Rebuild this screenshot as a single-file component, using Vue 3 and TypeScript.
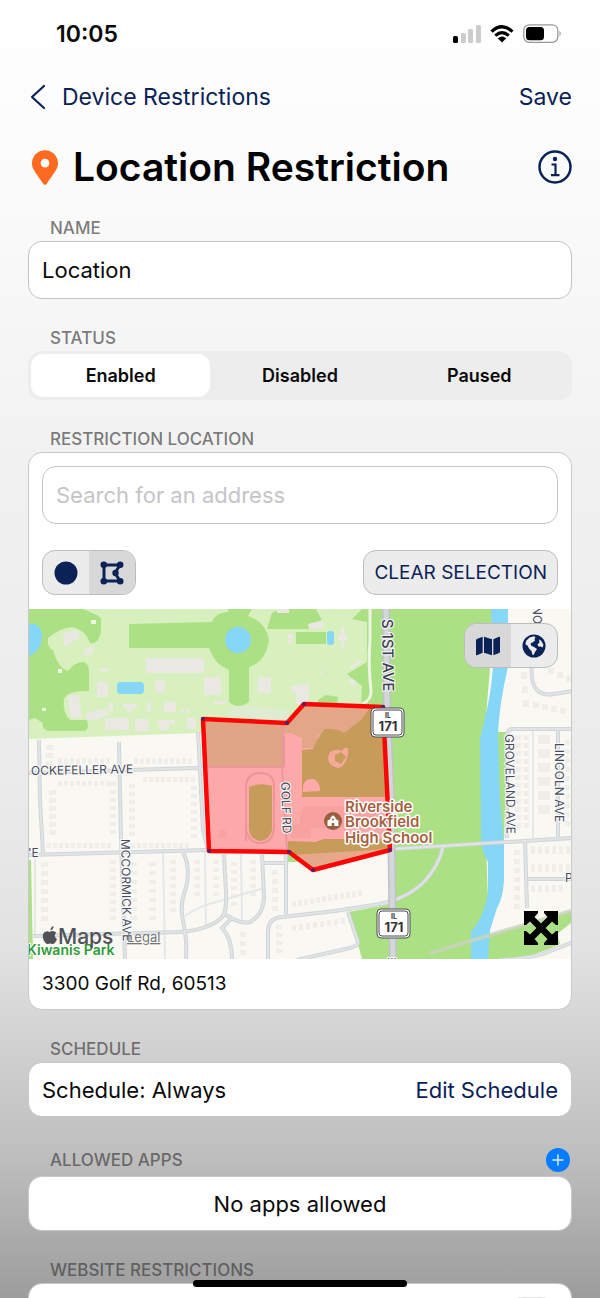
<script setup lang="ts">
import { ref } from 'vue'

type Status = 'Enabled' | 'Disabled' | 'Paused'
interface Row { x: number; y: number; n: number; dx: number; dy: number; w: number; h: number }

const statuses: Status[] = ['Enabled', 'Disabled', 'Paused']
const status = ref<Status>('Enabled')
const name = ref('Location')
const address = ref('')
const shape = ref<'circle' | 'polygon'>('polygon')
const layer = ref<'map' | 'globe'>('map')
const filtering = ref(false)

// Streets, drawn twice: a darker casing and a lighter centre line.
const streets: string[] = [
  'M29 773 L196 768 Q200 768 200 772 L203 830 L208 850',
  'M198 732 L200 768',
  'M39 740 L40 800 L43 854',
  'M119 742 L121 840 L125 960',
  'M29 855 L208 850 L393 849 L573 838',
  'M183 852 C190 866 189 880 184 894 C180 906 182 916 184 926 Q187 940 186 960',
  'M33 936 L180 932 C196 931 215 926 223 916 Q227 908 226 892 L224 854',
  'M223 913 Q240 925 250 922 Q264 914 264 896 L262 854',
  'M233 917 L222 928 Q232 938 232 960',
  'M286 853 L286 914',
  'M268 960 V932 Q268 918 282 917 L335 911 L393 902',
  'M380 904 Q413 897 429 876 Q441 860 443 846',
  'M348 912 L358 942 Q358 946 350 948 L297 960',
  'M573 729 H512 Q507 729 507 738 V838',
  'M532 660 Q530 684 537 690 Q543 696 554 694 L573 691',
  'M558 729 V838',
  'M525 840 L527 908',
  'M528 879 H573',
  'M500 960 Q535 958 548 952 L573 942',
  'M262 863 L286 863',
]
const lanes: string[] = [
  'M163 853 L165 960', 'M205 852 L206 925', 'M241 854 L242 920', 'M533 730 V838', 'M35 855 V935',
  'M185 916 Q198 906 220 901 L264 888',
]

// Runs of houses along the streets.
const rows: Row[] = [
  { x: 46, y: 745, n: 4, dx: 0, dy: 8, w: 7, h: 5 },
  { x: 58, y: 758, n: 9, dx: 6, dy: 0, w: 4, h: 6 },
  { x: 58, y: 781, n: 10, dx: 6, dy: 0, w: 4, h: 5 },
  { x: 134, y: 758, n: 10, dx: 6, dy: 0, w: 4, h: 6 },
  { x: 143, y: 777, n: 9, dx: 6, dy: 0, w: 4, h: 5 },
  { x: 49, y: 790, n: 6, dx: 0, dy: 8, w: 7, h: 5 },
  { x: 110, y: 782, n: 7, dx: 0, dy: 8, w: 6, h: 4 },
  { x: 129, y: 784, n: 7, dx: 0, dy: 8, w: 6, h: 4 },
  { x: 191, y: 786, n: 7, dx: 0, dy: 8, w: 6, h: 4 },
  { x: 47, y: 843, n: 11, dx: 6, dy: 0, w: 4, h: 5 },
  { x: 131, y: 843, n: 10, dx: 6, dy: 0, w: 4, h: 5 },
  { x: 41, y: 862, n: 7, dx: 0, dy: 9, w: 7, h: 5 },
  { x: 110, y: 860, n: 8, dx: 0, dy: 8, w: 6, h: 4 },
  { x: 130, y: 862, n: 7, dx: 0, dy: 9, w: 7, h: 4 },
  { x: 149, y: 862, n: 7, dx: 0, dy: 9, w: 7, h: 4 },
  { x: 170, y: 860, n: 7, dx: 0, dy: 8, w: 6, h: 4 },
  { x: 194, y: 860, n: 5, dx: 0, dy: 8, w: 6, h: 4 },
  { x: 213, y: 860, n: 5, dx: 0, dy: 8, w: 6, h: 4 },
  { x: 231, y: 862, n: 6, dx: 0, dy: 8, w: 6, h: 4 },
  { x: 250, y: 860, n: 5, dx: 0, dy: 8, w: 6, h: 4 },
  { x: 272, y: 870, n: 5, dx: 0, dy: 9, w: 6, h: 5 },
  { x: 292, y: 901, n: 12, dx: 6, dy: -1, w: 4, h: 6 },
  { x: 292, y: 925, n: 8, dx: 7, dy: -1, w: 4, h: 6 },
  { x: 276, y: 925, n: 4, dx: 0, dy: 8, w: 6, h: 4 },
  { x: 240, y: 932, n: 3, dx: 0, dy: 9, w: 6, h: 5 },
  { x: 515, y: 735, n: 12, dx: 0, dy: 8, w: 6, h: 5 },
  { x: 524, y: 735, n: 12, dx: 0, dy: 8, w: 5, h: 5 },
  { x: 538, y: 735, n: 6, dx: 0, dy: 14, w: 12, h: 9 },
  { x: 565, y: 740, n: 10, dx: 0, dy: 9, w: 5, h: 5 },
  { x: 531, y: 846, n: 6, dx: 7, dy: 0, w: 4, h: 8 },
  { x: 531, y: 864, n: 6, dx: 7, dy: 0, w: 4, h: 8 },
  { x: 531, y: 885, n: 5, dx: 7, dy: 0, w: 4, h: 7 },
  { x: 514, y: 850, n: 7, dx: 0, dy: 9, w: 6, h: 5 },
  { x: 548, y: 668, n: 3, dx: 9, dy: 4, w: 6, h: 6 },
  { x: 533, y: 702, n: 4, dx: 9, dy: 2, w: 6, h: 6 },
  { x: 521, y: 672, n: 3, dx: 1, dy: 14, w: 6, h: 7 },
]
const houses = rows.flatMap((r) =>
  Array.from({ length: r.n }, (_, i) => ({ x: r.x + r.dx * i, y: r.y + r.dy * i, w: r.w, h: r.h })),
)

const corners = [[203, 719], [287, 723], [304, 704], [383, 707], [390, 850], [313, 870], [289, 852], [209, 851]]
const outline = corners.map((c) => c.join(',')).join(' ')

function clearSelection() {
  address.value = ''
}
</script>

<template>
  <div class="screen">
    <div class="statusbar">
      <span class="clock">10:05</span>
      <div class="signals">
        <svg width="28" height="20" viewBox="0 0 28 20" aria-hidden="true">
          <rect x="0" y="12" width="5" height="7" rx="1.5" fill="#000" />
          <rect x="8" y="9" width="5" height="10" rx="1.5" fill="#ccc" />
          <rect x="15" y="5" width="5" height="14" rx="1.5" fill="#ccc" />
          <rect x="23" y="1" width="5" height="18" rx="1.5" fill="#ccc" />
        </svg>
        <svg width="24" height="18" viewBox="0 0 24 18" aria-hidden="true">
          <g fill="none" stroke="#000" stroke-width="3.2">
            <path d="M1.5 6.6 Q12 -3.2 22.5 6.6" />
            <path d="M5.3 10.6 Q12 4.6 18.7 10.6" />
          </g>
          <path d="M12 17.5 L7.7 13.2 Q12 9.8 16.3 13.2 Z" fill="#000" />
        </svg>
        <svg width="39" height="20" viewBox="0 0 39 20" aria-hidden="true">
          <rect x=".8" y=".8" width="34" height="17.6" rx="5.5" fill="none" stroke="#999" stroke-width="1.3" />
          <rect x="3" y="3" width="18" height="13.2" rx="3.5" fill="#000" />
          <path d="M36.500 6.5 Q39 9.5 36.5 12.5 Z" fill="#999" />
        </svg>
      </div>
    </div>

    <nav class="nav">
      <a class="back" href="#">
        <svg width="16" height="26" viewBox="0 0 16 26" fill="none" stroke="currentColor" stroke-width="2.2" stroke-linecap="round" stroke-linejoin="round" aria-hidden="true">
          <path d="M14 2 L2 13 L14 24" />
        </svg>
        Device Restrictions
      </a>
      <button class="link" type="button">Save</button>
    </nav>

    <main class="content">
      <header class="heading">
        <svg class="pin" width="26" height="35" viewBox="0 0 384 512" aria-hidden="true">
          <path fill="#ff6a20" fill-rule="evenodd" d="M172 502C27 291 0 269 0 192 0 86 86 0 192 0s192 86 192 192c0 77-27 99-172 310-10 13-30 13-40 0zM192 256a64 64 0 1 0 0-128 64 64 0 0 0 0 128z" />
        </svg>
        <h1>Location Restriction</h1>
        <button class="icon" type="button" aria-label="Information">
          <svg width="34" height="34" viewBox="0 0 34 34" aria-hidden="true">
            <circle cx="17" cy="17" r="15.5" fill="none" stroke="currentColor" stroke-width="2.5" />
            <circle cx="17" cy="9" r="2.2" fill="currentColor" />
            <path d="M13.5 14.5 H17.5 V25 M13 25.2 H21.5" fill="none" stroke="currentColor" stroke-width="2.2" />
          </svg>
        </button>
      </header>

      <section>
        <label class="caption" for="name">NAME</label>
        <input id="name" v-model="name" class="field" type="text" />
      </section>

      <section>
        <h2 id="status-label" class="caption">STATUS</h2>
        <div class="segments" role="radiogroup" aria-labelledby="status-label">
          <label v-for="s in statuses" :key="s" class="segment" :class="{ on: status === s }">
            <input v-model="status" class="hidden-input" type="radio" name="status" :value="s" />
            {{ s }}
          </label>
        </div>
      </section>

      <section>
        <label class="caption" for="address">RESTRICTION LOCATION</label>
        <div class="card">
          <div class="search">
            <input id="address" v-model="address" class="field" type="text" placeholder="Search for an address" />
          </div>
          <div class="tools">
            <div class="pair">
              <button type="button" :class="{ on: shape === 'circle' }" aria-label="Circle" @click="shape = 'circle'">
                <svg width="24" height="24" viewBox="0 0 24 24" aria-hidden="true"><circle cx="12" cy="12" r="11.5" fill="currentColor" /></svg>
              </button>
              <button type="button" :class="{ on: shape === 'polygon' }" aria-label="Polygon" @click="shape = 'polygon'">
                <svg width="24" height="24" viewBox="0 0 24 24" aria-hidden="true">
                  <path d="M4 4 H20 L15 12 L20 20 H4 Z" fill="none" stroke="currentColor" stroke-width="3" />
                  <g fill="currentColor">
                    <circle cx="3.8" cy="3.8" r="3.3" /><circle cx="20.2" cy="3.8" r="3.3" />
                    <circle cx="3.8" cy="20.2" r="3.3" /><circle cx="20.2" cy="20.2" r="3.3" />
                    <circle cx="15.5" cy="12" r="3.2" />
                  </g>
                </svg>
              </button>
            </div>
            <button class="clear" type="button" @click="clearSelection">CLEAR SELECTION</button>
          </div>

          <div class="map">
            <svg class="canvas" viewBox="29 609 542 350" preserveAspectRatio="xMidYMid slice" role="group" aria-label="Map">
              <rect x="29" y="609" width="542" height="350" fill="#f9f8f3" />
              <path d="M29 609 H384 V723 L198 733 L29 739 Z" fill="#d7f0be" />

              <g fill="#abe184">
                <path d="M29 609 H83 Q96 614 101 618 L101 632 Q98 645 90 643 Q86 630 72 627 Q60 628 48 638 Q47 648 53 650 Q58 668 68 671 Q74 662 84 662 Q89 664 89 672 V691 Q68 690 64 699 Q62 712 70 720 H87 Q90 730 84 731 H48 Q41 728 43 723 L35 718 L29 720 Z" />
                <path d="M129 624 L212 622 Q216 612 228 612 V609 H252 L248 616 Q266 622 269 640 Q266 662 249 667 V702 Q238 710 229 702 V670 Q214 664 209 648 H129 Z" />
                <path d="M267 629 L272 613 L280 609 H316 L323 622 L312 629 Z" />
                <path d="M296 632 H326 V644 H296 Z" />
                <path d="M352 619 L362 609 H384 V708 H361 L362 686 L347 674 L367 662 V622 Z" />
                <path d="M318 700 L326 695 L338 697 L337 706 H318 Z" />
                <path d="M388 609 H495 L484 740 L486 843 L490 959 H396 Z" />
                <path d="M348 912 L392 904 V959 H362 L358 944 Z" />
                <path d="M490 935 L571 911 V923 L557 934 L560 944 Q538 956 507 959 H484 Z" />
                <path d="M497 732 H507 L504 842 H500 Z" />
                <path d="M29 860 L31 860 L33 959 H29 Z" />
                <path d="M286 852 H290 L304 862 H287 Z" />
              </g>
              <g fill="#86d6f8">
                <path d="M29 624 Q41 622 42 636 Q42 650 29 656 Z" />
                <circle cx="238" cy="640" r="13" />
                <rect x="117" y="682" width="27" height="12" rx="4" />
                <rect x="327" y="631" width="7" height="14" rx="3" />
                <path d="M491 609 H508 L508 667 Q500 700 498 732 L500 800 L504 843 V880 Q503 898 497 908 L490 930 L488 959 H471 V932 Q486 914 488 890 V862 Q481 850 481 838 L480 738 Q493 690 493 660 Z" />
              </g>

              <g fill="#e9e8e3">
                <rect x="146" y="658" width="58" height="15" /><rect x="97" y="682" width="11" height="15" />
                <rect x="155" y="680" width="10" height="12" /><path d="M68 695 H79 L82 718 H70 Z" />
                <path d="M85 714 L98 710 H108 V715 L96 720 H87 Z" /><rect x="105" y="718" width="24" height="12" />
                <rect x="135" y="719" width="14" height="12" /><path d="M157 720 H175 V724 H169 V730 H160 Z" />
                <rect x="187" y="718" width="9" height="11" /><path d="M123 704 H137 V708 H132 V712 H127 V708 H123 Z" />
                <rect x="147" y="702" width="4" height="10" /><rect x="109" y="703" width="4" height="9" />
                <rect x="164" y="702" width="12" height="10" /><rect x="204" y="677" width="17" height="18" />
                <path d="M63 633 L78 630 L80 638 L70 643 L65 648 Z" /><path d="M84 650 L95 645 L92 654 L84 656 Z" />
                <rect x="258" y="677" width="13" height="16" /><path d="M291 686 L309 683 V704 H296 V692 H291 Z" />
                <path d="M308 624 L323 620 V628 L309 629 Z" /><path d="M338 634 H341 V626 H344 V634 H347 V641 H344 V649 H341 V641 H338 Z" />
                <path d="M349 668 L359 659 L362 662 L352 669 Z" /><path d="M319 674 L326 668 L321 675 Z" />
                <rect x="288" y="634" width="5" height="4" /><rect x="288" y="639" width="5" height="4" />
                <path d="M349 679 L356 681 L355 686 L350 685 Z" /><rect x="214" y="701" width="12" height="3" />
                <path d="M229 711 Q240 702 252 707 L290 710 L287 722 L229 716 Z" opacity=".5" />
                <rect x="181" y="709" width="3" height="4" /><rect x="187" y="709" width="3" height="4" />
                <rect x="277" y="609" width="12" height="4" /><rect x="100" y="668" width="9" height="3" />
              </g>
              <path d="M370 609 L370 640 Q368 665 371 690 Q372 700 362 704" fill="none" stroke="#edf5e2" stroke-width="3" />
              <g fill="#fff" opacity=".8">
                <rect x="91" y="620" width="5" height="4" /><rect x="58" y="669" width="4" height="4" /><rect x="42" y="708" width="4" height="3" />
              </g>

              <g fill="#efeeeb">
                <rect v-for="(h, i) in houses" :key="i" :x="h.x" :y="h.y" :width="h.w" :height="h.h" />
              </g>

              <path d="M430 953 L571 911" fill="none" stroke="#c9d3bd" stroke-width="4" opacity=".8" />
              <g fill="none" stroke="#e6e7e7" stroke-width="2"><path v-for="d in lanes" :key="d" :d="d" /></g>
              <g fill="none" stroke="#d0d5d7" stroke-width="4"><path v-for="d in streets" :key="d" :d="d" /></g>
              <g fill="none" stroke="#e0e4e6" stroke-width="2"><path v-for="d in streets" :key="d" :d="d" /></g>
              <path d="M386 609 L387 710 L391 800 L393 960" fill="none" stroke="#bfc3c6" stroke-width="8" />
              <path d="M386 609 L387 710 L391 800 L393 960" fill="none" stroke="#d4d7d9" stroke-width="5" />

              <polygon :points="outline" fill="#fda9a9" />
              <path d="M204 720 L284 724 L282 767 H206 Z" fill="#e0a585" />
              <path d="M287 723 L304 704 L383 707 L363 722 L345 735 L318 735 L316 748 H302 V738 L291 733 L283 734 L284 723 Z" fill="#e3a787" />
              <path d="M383 708 L388 797 H302 V750 L313 749 Q316 740 325 729 Q335 728 344 733 L362 719 L369 709 Z" fill="#c79c5b" />
              <path d="M288 841 L315 842 L324 839 H389 L390 848 L340 860 H304 L288 850 Z" fill="#c79c5b" />
              <path d="M292 855 L388 849 L313 869 Z" fill="#e6a88a" />
              <path d="M303 787 Q304 778 313 779 Q320 781 320 791 L303 792 Z" fill="#fda9a9" />
              <path d="M330 752 Q337 748 342 751 L344 748 H348 V754 Q346 766 338 768 Q328 766 328 757 Z" fill="#f5a99a" />
              <path d="M335 755 L341 752 L346 757 L341 764 L335 761 Z" fill="#c79c5b" />
              <path d="M206 767 H284 M283 724 V767 M282 767 L287 850 M284 736 V767" fill="none" stroke="#e9979b" stroke-width="2" />
              <path d="M246 841 V786 Q247 773 260 773 Q274 773 274 786 V828 Q273 843 260 843 Q249 843 246 830" fill="none" stroke="#ed9496" stroke-width="2" />
              <path d="M249 787 Q260 782 272 786 V830 Q270 840 260 841 Q249 839 249 828 Z" fill="#c79c5b" />
              <g fill="#f6a09f" opacity=".8">
                <rect x="218" y="830" width="8" height="8" /><path d="M304 806 H380 V828 H300 V812 Z" /><rect x="291" y="824" width="20" height="14" />
              </g>
              <polygon :points="outline" fill="none" stroke="#fb0505" stroke-width="4.5" stroke-linejoin="round" />
              <circle v-for="c in corners" :key="c.join()" :cx="c[0]" :cy="c[1]" r="2" fill="#58206a" />

              <g class="street">
                <text x="31" y="775" transform="rotate(-1 31 775)">OCKEFELLER AVE</text>
                <text x="28" y="857">'E</text>
                <text x="565" y="882">P</text>
                <text transform="translate(121 839) rotate(89)">MCCORMICK AVE</text>
                <text transform="translate(281 782) rotate(88)">GOLF RD</text>
                <text transform="translate(505 734) rotate(89)">GROVELAND AVE</text>
                <text transform="translate(555 743) rotate(90)">LINCOLN AVE</text>
                <text transform="translate(533 606) rotate(90)">NO</text>
                <text class="major" transform="translate(382 619) rotate(89)">S 1ST AVE</text>
                <text x="387" y="967">III</text>
              </g>

              <g class="shield">
                <rect x="371" y="708" width="33" height="29" rx="4" fill="#fff" stroke="#4a4a4e" stroke-width="1" />
                <rect x="373" y="710" width="29" height="25" rx="3" fill="#fff" stroke="#4a4a4e" stroke-width="1" />
                <text class="state" x="388" y="718">IL</text><text x="388" y="731">171</text>
                <rect x="377" y="909" width="33" height="29" rx="4" fill="#fff" stroke="#4a4a4e" stroke-width="1" />
                <rect x="379" y="911" width="29" height="25" rx="3" fill="#fff" stroke="#4a4a4e" stroke-width="1" />
                <text class="state" x="394" y="919">IL</text><text x="394" y="932">171</text>
              </g>

              <circle cx="333" cy="821" r="9" fill="#98603f" />
              <path fill="#fff" fill-rule="evenodd" d="M327.500 826 V820.5 L330.5 819 V817.5 L333 815.2 L335.5 817.5 V819 L338.5 820.5 V826 H334.2 V823 H331.8 V826 Z M332.2 818.5 V820.5 H333.8 V818.5 Z" />
              <g class="place">
                <text x="345" y="812">Riverside</text><text x="345" y="827">Brookfield</text><text x="345" y="843">High School</text>
              </g>

              <text class="park" x="27" y="955">Kiwanis Park</text>
              <g fill="#505257">
                <path d="M50.500 930.5 Q50.3 927.3 53.4 926 Q53.8 929.3 50.5 930.500 Z M49.500 932 Q53.5 929.5 56.3 932.8 Q52.8 935.8 57 939.2 Q55 943.8 52.6 944 Q50 942.8 48 944 Q45.5 944.3 43.400 939.8 Q41.500 934 45.200 931.800 Q47.500 930.800 49.500 932 Z" />
              </g>
              <text class="brand" x="58" y="944">Maps</text>
              <a href="#"><text class="legal" x="127" y="942">Legal</text></a>
            </svg>

            <div class="pair layers">
              <button type="button" :class="{ on: layer === 'map' }" aria-label="Map view" @click="layer = 'map'">
                <svg width="24" height="20" viewBox="0 0 576 480" aria-hidden="true">
                  <path fill="currentColor" d="M0 102v346c0 12 11 19 22 15L160 400V16L20 72A32 32 0 0 0 0 102zM192 400l192 64V80L192 16v384zM554 17L416 80v384l140-56a32 32 0 0 0 20-30V32c0-11-11-19-22-15z" />
                </svg>
              </button>
              <button type="button" :class="{ on: layer === 'globe' }" aria-label="Globe view" @click="layer = 'globe'">
                <svg width="24" height="24" viewBox="0 0 24 24" aria-hidden="true">
                  <circle cx="12" cy="12" r="11.5" fill="currentColor" />
                  <path fill="#ececec" d="M4 7 L7.5 3.5 L12 2.300 L13.500 3.5 L12.5 5 L13 6.5 L10.5 8.500 L8.500 9.500 L9 11.5 L12 13 L15 15 L13 18 L11.500 21 L10.500 21 L9.500 17 L7 14.500 L5.500 11.500 L3.500 10.5 Z M17 5.500 L19 6.500 L20.500 9 L21.5 11 L20.500 13.500 L18.500 12.500 L16.500 12.500 L15.500 10.500 L17.500 8.500 Z" />
                </svg>
              </button>
            </div>
            <button class="expand" type="button" aria-label="Expand map">
              <svg width="34" height="34" viewBox="0 0 34 34" aria-hidden="true">
                <path fill="#000" d="M0 0 H14 V2 L10.5 6 L17 12.5 L23.5 6 L20 2 V0 H34 V14 H32 L28 10.5 L21.5 17 L28 23.5 L32 20 H34 V34 H20 V32 L23.5 28 L17 21.5 L10.5 28 L14 32 V34 H0 V20 H2 L6 23.5 L12.5 17 L6 10.5 L2 14 H0 Z" />
              </svg>
            </button>
          </div>
          <p class="address">3300 Golf Rd, 60513</p>
        </div>
      </section>

      <section>
        <h2 class="caption">SCHEDULE</h2>
        <div class="card line">
          <span>Schedule: Always</span>
          <button class="link" type="button">Edit Schedule</button>
        </div>
      </section>

      <section>
        <div class="caption-row">
          <h2 class="caption">ALLOWED APPS</h2>
          <button class="icon" type="button" aria-label="Add app">
            <svg width="24" height="24" viewBox="0 0 24 24" aria-hidden="true">
              <circle cx="12" cy="12" r="12" fill="#087cff" />
              <path d="M12 6.5 V17.5 M6.5 12 H17.5" stroke="#dcebff" stroke-width="1.5" />
            </svg>
          </button>
        </div>
        <div class="card line centered">No apps allowed</div>
      </section>

      <section>
        <h2 class="caption">WEBSITE RESTRICTIONS</h2>
        <div class="card line switch-line">
          <input v-model="filtering" class="switch" type="checkbox" role="switch" aria-label="Website restrictions" />
        </div>
      </section>
    </main>
    <div class="home-indicator"></div>
  </div>
</template>

<style>
body {
  margin: 0;
}
</style>

<style scoped>
* {
  box-sizing: border-box;
}
.screen {
  height: 100vh;
  display: flex;
  flex-direction: column;
  position: relative;
  overflow: hidden;
  background: linear-gradient(#fff 0%, #fafafa 16%, #f1f1f1 36%, #ebebeb 60%, #e2e2e2 73%, #d0d0d0 81%, #c1c1c1 88%, #9d9d9d 100%);
  font-family: Inter, "Liberation Sans", sans-serif;
  font-size: 22px;
  color: #0a0a0a;
}
.statusbar {
  flex: none;
  height: 68px;
  padding: 0 38px 0 56px;
  display: flex;
  align-items: center;
  justify-content: space-between;
}
.clock {
  font-size: 23px;
  font-weight: 600;
}
.signals {
  display: flex;
  align-items: center;
  gap: 9px;
}
.nav {
  flex: none;
  height: 58px;
  padding: 0 28px;
  display: flex;
  align-items: center;
  justify-content: space-between;
  font-size: 23px;
}
button {
  font: inherit;
  margin: 0;
  padding: 0;
  border: 0;
  background: none;
  color: #0b2257;
}
.back {
  display: flex;
  align-items: center;
  gap: 16px;
  color: #0b2257;
  text-decoration: none;
  padding-left: 2px;
}
.content {
  flex: 1;
  min-height: 0;
  overflow-y: auto;
  scrollbar-width: none;
  padding: 0 28px;
}
.heading {
  height: 82px;
  display: flex;
  align-items: center;
  margin-bottom: 8px;
}
.pin {
  margin: 0 15px 0 4px;
}
h1 {
  flex: 1;
  margin: 0;
  font-size: 39px;
  line-height: 48px;
  font-weight: 600;
  color: #000;
}
h1,
.caption,
.line,
.clear {
  white-space: nowrap;
}
.icon,
.icon svg {
  display: block;
}
section {
  margin-bottom: 27px;
}
.caption {
  display: block;
  margin: 0;
  padding-left: 22px;
  font-size: 17px;
  line-height: 25px;
  font-weight: 500;
  color: rgba(60, 60, 60, 0.68);
}
.caption-row {
  display: flex;
  align-items: center;
  justify-content: space-between;
  height: 32px;
  padding-right: 2px;
}
.field {
  display: block;
  width: 100%;
  height: 58px;
  padding: 0 13px;
  border: 1px solid #c4c4c6;
  border-radius: 14px;
  background: #fff;
  font: inherit;
  color: #0a0a0a;
  outline: none;
}
.field::placeholder {
  color: #c5c5c7;
  opacity: 1;
}
.segments {
  display: grid;
  grid-template-columns: repeat(3, 1fr);
  height: 49px;
  padding: 3px;
  border-radius: 14px;
  background: #ededed;
}
.segment {
  display: flex;
  align-items: center;
  justify-content: center;
  border-radius: 12px;
  font-size: 18px;
  font-weight: 600;
}
.segment.on {
  background: #fff;
}
.hidden-input {
  position: absolute;
  opacity: 0;
  pointer-events: none;
}
.card {
  border: 1px solid #c8c8ca;
  border-radius: 14px;
  background: #fff;
  overflow: hidden;
}
.search {
  padding: 13px 13px 0;
}
.tools {
  display: flex;
  justify-content: space-between;
  padding: 26px 13px 14px;
}
.pair {
  display: flex;
  height: 45px;
  border: 1px solid #bdbdbf;
  border-radius: 13px;
  overflow: hidden;
  background: #ececec;
}
.pair button {
  width: 46px;
  display: flex;
  align-items: center;
  justify-content: center;
}
.pair button.on {
  background: #d8d8d8;
}
.clear {
  height: 45px;
  padding: 0 10px;
  border: 1px solid #bdbdbf;
  border-radius: 13px;
  background: #ececec;
  font-size: 19px;
}
.map {
  position: relative;
  height: 350px;
}
.canvas {
  display: block;
  width: 100%;
  height: 100%;
}
.layers {
  position: absolute;
  top: 14px;
  right: 13px;
}
.expand {
  position: absolute;
  right: 13px;
  bottom: 14px;
}
.expand svg {
  display: block;
}
.street {
  font-size: 12px;
  fill: #484b60;
  stroke: #fafaf7;
  stroke-width: 2px;
  paint-order: stroke;
}
.major {
  font-size: 15px;
  font-weight: 500;
  fill: #3c3f55;
}
.shield {
  font-size: 13px;
  font-weight: 700;
  fill: #333;
  text-anchor: middle;
}
.shield .state {
  font-size: 7px;
}
.place {
  font-size: 15px;
  font-weight: 600;
  fill: #a4623f;
  stroke: #fff;
  stroke-width: 3px;
  stroke-linejoin: round;
  paint-order: stroke;
}
.park {
  font-size: 14px;
  font-weight: 600;
  fill: #2f9b34;
  stroke: #fff;
  stroke-width: 2px;
  paint-order: stroke;
}
.brand {
  font-size: 21px;
  font-weight: 500;
  fill: #505257;
}
.legal {
  font-size: 13px;
  fill: #77787c;
  text-decoration: underline;
}
.address {
  margin: 0;
  padding: 0 13px;
  font-size: 19px;
  line-height: 50px;
}
.line {
  display: flex;
  align-items: center;
  justify-content: space-between;
  height: 55px;
  padding: 0 13px;
}
.centered {
  justify-content: center;
}
.switch-line {
  height: 60px;
  justify-content: flex-end;
}
.switch {
  appearance: none;
  width: 52px;
  height: 32px;
  margin: 0;
  border-radius: 16px;
  background: #e4e4e6;
}
.home-indicator {
  position: absolute;
  left: 50%;
  bottom: 11px;
  width: 214px;
  height: 7px;
  margin-left: -107px;
  border-radius: 4px;
  background: #000;
}
</style>
